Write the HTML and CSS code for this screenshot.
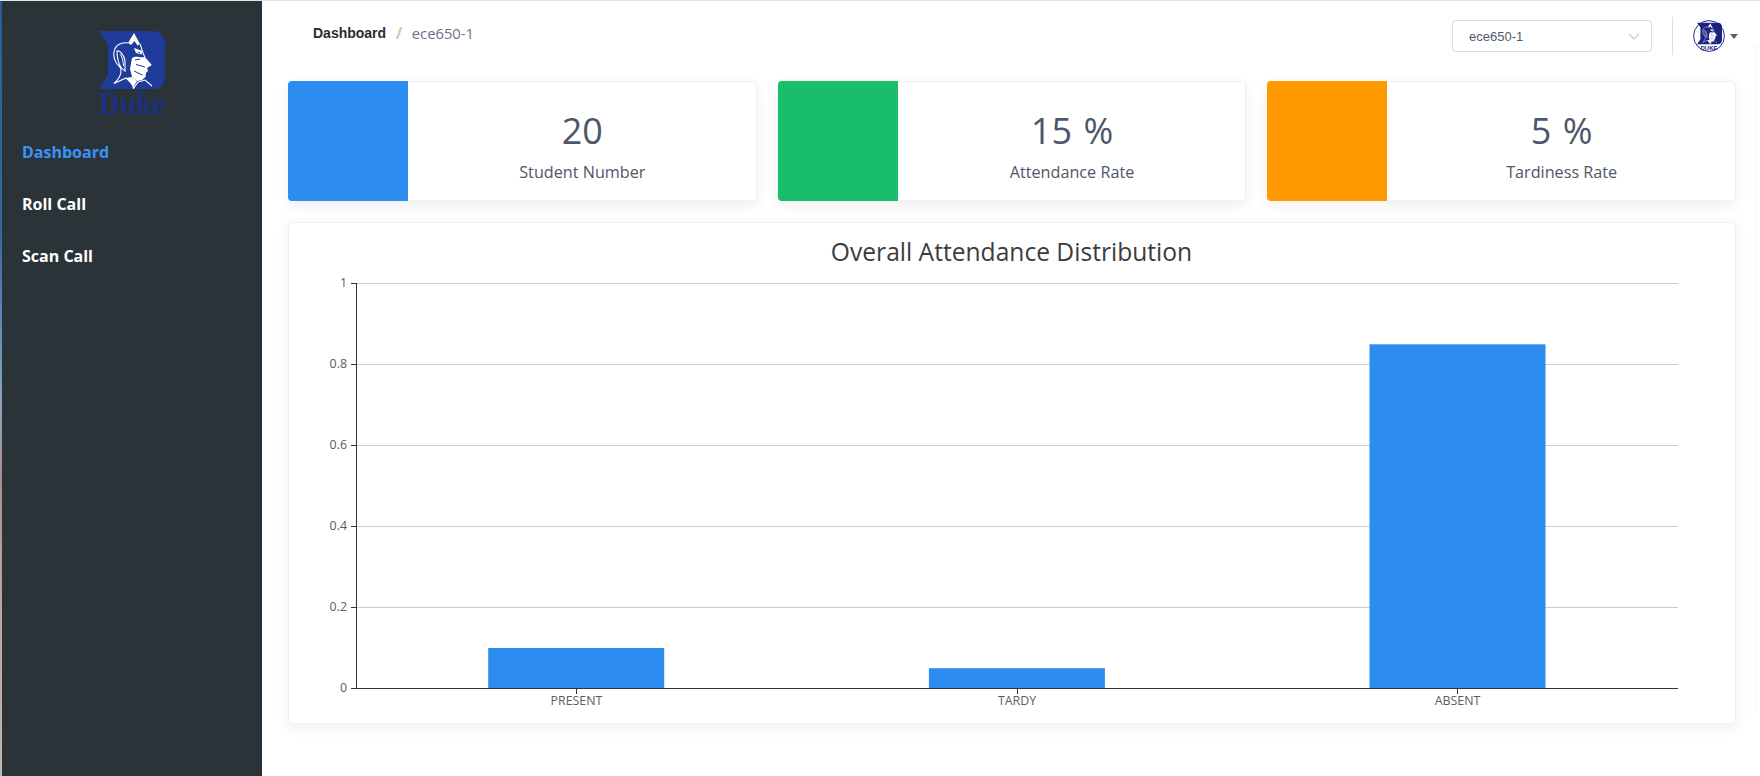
FILE: index.html
```html
<!DOCTYPE html>
<html lang="en">
<head>
<meta charset="utf-8">
<title>Dashboard</title>
<link rel="stylesheet" href="styles.css">
</head>
<body>
<svg class="defs" width="0" height="0" aria-hidden="true">
  <defs>
    <symbol id="devil" viewBox="0 0 66 58">
      <path d="M0 0H54C61 0 66 5 66 12V47C66 53 61 58 55 58H0L9 44V13Z" fill="currentColor"/>
      <path d="M35 2L41 13L38.5 14.5L35.5 10L32 14L29 12Z" fill="#fff"/>
      <path d="M33 27C37 24 40 27 46 26L52.8 34L48 37L49 40L47 42L46.5 46L43 49L38 50L33 46L31 38Z" fill="#fff"/>
      <path d="M35 17L43.5 20L42.5 23.5L37 22Z" fill="#fff"/>
      <path d="M29 12C22 11 16 14 15 21C14 27 17 33 21 36C23 40 22 46 15 52.5M41 13C43 18 44 23 46 26M18 20C21 19 25 24 26 30L26 40C23 38 20 34 19 29C18 26 18 23 18 20ZM15 52.5L27 47L33 52L34.5 57.5L39 51L46 49L53 55" fill="none" stroke="#fff" stroke-width="1.1"/>
      <path d="M21 23C23 25 24 29 24.5 35" fill="none" stroke="#fff" stroke-width="1"/>
      <path d="M27 47L33 46L38 50L34.5 56Z" fill="#fff"/>
      <path d="M38 20.5L41.5 21.5L40.5 22.6Z" fill="currentColor"/>
      <path d="M37 33.5L46 36M35 40L43.5 44M36 29L41 28" fill="none" stroke="currentColor" stroke-width="1"/>
    </symbol>
  </defs>
</svg>
<div class="app">
  <aside class="sidebar">
    <svg class="logo" viewBox="0 0 66 95" role="img" aria-label="Duke">
      <use href="#devil" width="66" height="58" class="logo-mark"/>
      <text class="logo-word" x="0" y="83" textLength="66" lengthAdjust="spacingAndGlyphs">Duke</text>
    </svg>
    <nav class="menu">
      <a class="menu-item is-active">Dashboard</a>
      <a class="menu-item">Roll Call</a>
      <a class="menu-item">Scan Call</a>
    </nav>
  </aside>
  <main class="main">
    <header class="header">
      <div class="crumbs">
        <span class="crumb-root">Dashboard</span>
        <span class="crumb-sep">/</span>
        <span class="crumb-leaf">ece650-1</span>
      </div>
      <div class="header-right">
        <div class="select">
          <span>ece650-1</span>
          <svg class="select-arrow" viewBox="0 0 12 7"><path d="M1 1L6 6L11 1" fill="none" stroke="#c5c8ce" stroke-width="1.2"/></svg>
        </div>
        <div class="divider"></div>
        <svg class="avatar" viewBox="0 0 32 32" role="img" aria-label="Duke">
          <circle cx="16" cy="16" r="15.4" fill="#fff" stroke="#262f8c" stroke-width="1"/>
          <use href="#devil" x="4" y="2.5" width="25" height="22" class="avatar-mark"/>
          <text class="avatar-word" x="16" y="29.5" text-anchor="middle">DUKE</text>
        </svg>
        <span class="caret"></span>
      </div>
    </header>
    <section class="stats">
      <article class="stat">
        <div class="stat-icon blue"></div>
        <div class="stat-body"><div class="stat-value">20</div><div class="stat-label">Student Number</div></div>
      </article>
      <article class="stat">
        <div class="stat-icon green"></div>
        <div class="stat-body"><div class="stat-value">15 %</div><div class="stat-label">Attendance Rate</div></div>
      </article>
      <article class="stat">
        <div class="stat-icon orange"></div>
        <div class="stat-body"><div class="stat-value">5 %</div><div class="stat-label">Tardiness Rate</div></div>
      </article>
    </section>
    <section class="chart-card">
      <svg class="chart" viewBox="0 0 1446 499">
        <text class="chart-title" x="722.5" y="38" text-anchor="middle">Overall Attendance Distribution</text>
        <g class="grid">
          <path d="M67 60.5H1389M67 141.5H1389M67 222.5H1389M67 303.5H1389M67 384.5H1389"/>
        </g>
        <g class="bars">
          <rect x="199.2" y="425" width="176" height="40.5"/>
          <rect x="639.9" y="445.2" width="176" height="20.3"/>
          <rect x="1080.5" y="121.3" width="176" height="344.2"/>
        </g>
        <g class="axis">
          <path d="M67.5 60V466M62 60.5H67M62 141.5H67M62 222.5H67M62 303.5H67M62 384.5H67M62 465.5H1389M287.5 466V471M728.5 466V471M1168.5 466V471"/>
        </g>
        <g class="y-labels">
          <text x="58" y="63.5" text-anchor="end">1</text>
          <text x="58" y="144.5" text-anchor="end">0.8</text>
          <text x="58" y="225.5" text-anchor="end">0.6</text>
          <text x="58" y="306.5" text-anchor="end">0.4</text>
          <text x="58" y="387.5" text-anchor="end">0.2</text>
          <text x="58" y="468.5" text-anchor="end">0</text>
        </g>
        <g class="x-labels">
          <text x="287.5" y="482" text-anchor="middle">PRESENT</text>
          <text x="728" y="482" text-anchor="middle">TARDY</text>
          <text x="1168.5" y="482" text-anchor="middle">ABSENT</text>
        </g>
      </svg>
    </section>
    <div class="rail"></div>
  </main>
</div>
</body>
</html>
```
FILE: styles.css
```css
* { box-sizing: border-box; }
html, body { margin: 0; height: 100%; overflow: hidden; background: #fff; }
.defs { position: absolute; }
.app {
  display: flex;
  height: 100vh;
  border-top: 1px solid #e3e4e6;
  font-family: "Open Sans", "Noto Sans", sans-serif;
}
.sidebar {
  flex: 0 0 262px;
  display: flex;
  flex-direction: column;
  background: #293338;
  border-left: 2px solid;
  border-image: linear-gradient(180deg, #2a5c98 0%, #36689e 30%, #5d8db5 42%, #8ea4b8 52%, #b08c8e 62%, #b99f9c 72%, #bdb8b0 100%) 1;
}
.logo { display: block; width: 66px; height: 95px; margin: 30px auto 0; flex: none; overflow: visible; }
.logo-mark { color: #1f3c9b; }
.logo-word { font-family: "Liberation Serif", serif; font-weight: 700; font-size: 32px; fill: #1b327f; }
.menu { display: flex; flex-direction: column; }
.menu-item {
  display: block;
  height: 52px;
  line-height: 52px;
  padding-left: 20px;
  font-size: 16px;
  font-weight: 700;
  color: #fff;
}
.menu-item.is-active { color: #3b93f5; }
.main { position: relative; flex: 1; min-width: 0; padding: 0 24px 0 26px; }
.header { display: flex; justify-content: space-between; align-items: center; height: 70px; margin-bottom: 10px; }
.crumbs { display: flex; align-items: center; margin: 0 0 6px 25px; font-size: 14.8px; }
.crumb-root { font-family: "Liberation Sans", sans-serif; font-size: 14px; font-weight: 700; color: #2b2b2b; }
.crumb-sep { margin: 0 9.5px; color: #c5c8ce; font-size: 16px; font-weight: 700; }
.crumb-leaf { color: #697284; }
.header-right { display: flex; align-items: center; margin-right: -2px; }
.select {
  display: flex;
  align-items: center;
  justify-content: space-between;
  width: 200px;
  height: 32px;
  padding: 0 11px 0 16px;
  border: 1px solid #dcdee2;
  border-radius: 4px;
  font-family: "Liberation Sans", sans-serif;
  font-size: 13px;
  color: #515a6e;
}
.select-arrow { width: 12px; height: 7px; }
.divider { width: 1px; height: 38px; margin: 0 20px; background: #dcdee2; }
.avatar { width: 32px; height: 32px; flex: none; }
.avatar-mark { color: #1a237e; }
.avatar-word { font-family: "Liberation Sans", sans-serif; font-weight: 700; font-size: 6px; fill: #1a237e; }
.caret {
  width: 0;
  height: 0;
  margin: 1px 0 0 5px;
  border-left: 4px solid transparent;
  border-right: 4px solid transparent;
  border-top: 5px solid #5a6270;
}
.stats { display: flex; gap: 21px; margin-bottom: 21px; }
.stat {
  flex: 1;
  display: flex;
  height: 120px;
  background: #fff;
  border-radius: 4px;
  overflow: hidden;
  box-shadow: inset 0 0 0 1px #eff0f6, 0 4px 14px rgba(0, 0, 0, 0.07);
}
.stat-icon { flex: 0 0 120px; }
.blue { background: #2d8cf0; }
.green { background: #19be6b; }
.orange { background: #ff9900; }
.stat-body { flex: 1; text-align: center; color: #4e5769; padding-top: 28px; }
.stat-value { font-size: 36px; line-height: 44px; word-spacing: 2px; }
.stat-label { font-size: 16.2px; line-height: 24px; margin-top: 7px; }
.chart-card {
  height: 502px;
  background: #fff;
  border-radius: 4px;
  border: 1px solid #eff0f6;
  box-shadow: 0 4px 14px rgba(0, 0, 0, 0.07);
}
.chart { display: block; width: 1446px; height: 499px; }
.chart-title { font-size: 24.6px; fill: #3c3c3c; }
.grid path { fill: none; stroke: #ccc; stroke-width: 1; }
.axis path { fill: none; stroke: #333; stroke-width: 1; }
.bars rect { fill: #2d8cf0; }
.y-labels text, .x-labels text { font-size: 12.4px; fill: #5c5c5c; }
.rail { position: absolute; top: 44px; right: 2px; width: 5px; height: 668px; background: #fbfbfb; border-radius: 3px; }
```
